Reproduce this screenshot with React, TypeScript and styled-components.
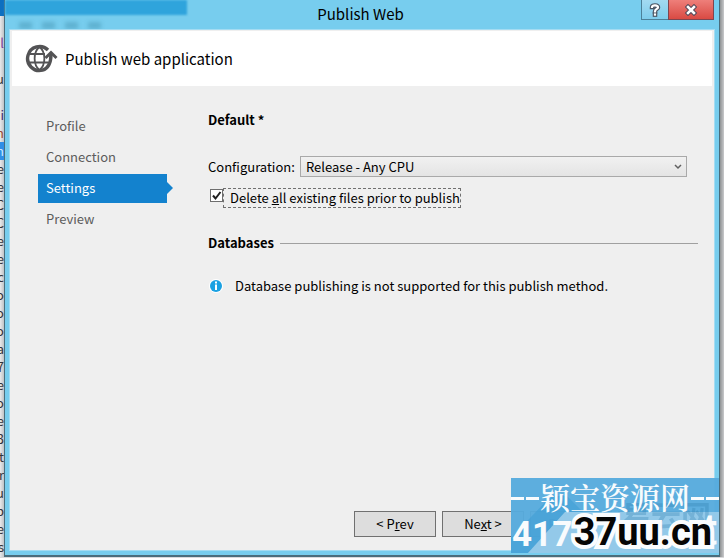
import React from 'react';
import styled, { createGlobalStyle, css } from 'styled-components';

const GlobalStyle = createGlobalStyle`
  *, *::before, *::after { box-sizing: border-box; }
  body {
    margin: 0;
    background: #d9d9db;
    color: #000;
    font: 13px/18px "Noto Sans CJK SC", "Noto Sans", sans-serif;
  }
  button, select, input { font: inherit; color: inherit; margin: 0; }
`;

const Desktop = styled.div`
  display: grid;
  grid-template-columns: 4px minmax(0, 1fr) 4px;
  min-height: 100vh;
  padding-bottom: 1px;
`;

const EditorEdge = styled.div`
  position: relative;
  overflow: hidden;
  background: linear-gradient(90deg, #e9e9eb, #bfc3c6);
`;

const EditorLines = styled.div`
  position: absolute;
  inset: 0;
`;

const EditorTop = styled.div`
  height: 16px;
  background: #0d6fc0;
`;

const EditorLine = styled.div<{ $selected?: boolean; $tone?: string }>`
  display: flex;
  justify-content: flex-end;
  height: 18px;
  color: ${(p) => p.$tone ?? '#33343a'};
  white-space: nowrap;
  ${(p) => p.$selected && css`background: #2f8ee6; color: #cfe6fb;`}
`;

const RightShadow = styled.div`
  background: linear-gradient(90deg, #8f9294, #c9cacc);
`;

const Window = styled.section`
  position: relative;
  display: flex;
  flex-direction: column;
  border: solid #4a6d7c;
  border-width: 0 1px 2px;
  background: #77cdee;
  padding: 0 5px 5px;
`;

const BehindGlass = styled.div`
  position: absolute;
  top: 0;
  left: 0;
  width: 182px;
  height: 15px;
  background: #2fa4dc;
  filter: blur(1px);
`;

const GlassMarks = styled.div`
  position: absolute;
  top: 22px;
  left: 14px;
  display: flex;
  gap: 10px;
  filter: blur(2px);
  i { width: 13px; height: 7px; background: #4f9fbd; opacity: 0.6; }
`;

const TitleBar = styled.header`
  position: relative;
  display: grid;
  grid-template-columns: 1fr auto;
  height: 30px;
`;

const WindowTitle = styled.h1`
  margin: 0;
  padding-left: 70px;
  font-size: 15px;
  font-weight: 400;
  line-height: 28px;
  text-align: center;
`;

const CaptionButtons = styled.div`
  display: flex;
  height: 20px;
`;

const CaptionButton = styled.button<{ $close?: boolean }>`
  display: grid;
  place-items: center;
  width: ${(p) => (p.$close ? 46 : 28)}px;
  padding: 0;
  border: 1px solid ${(p) => (p.$close ? '#7d4650' : '#4c8199')};
  border-top: 0;
  margin-left: ${(p) => (p.$close ? -1 : 0)}px;
  background: ${(p) =>
    p.$close
      ? 'linear-gradient(#ee7f7a, #d94a43)'
      : 'linear-gradient(#a3daf1, #7fcdec)'};
`;

const Client = styled.main`
  position: relative;
  flex: 1;
  display: flex;
  flex-direction: column;
  border: solid #efefef;
  border-width: 1px 2px 2px;
  outline: 1px solid #a5dcf2;
  background: #efefef;
`;

const Banner = styled.div`
  display: flex;
  align-items: center;
  gap: 6px;
  height: 55px;
  padding-left: 13px;
  background: #fff;
`;

const BannerTitle = styled.h2`
  margin: 0;
  font-size: 15px;
  font-weight: 400;
  line-height: 24px;
`;

const Body = styled.div`
  flex: 1;
  display: grid;
  grid-template-columns: 129px minmax(0, 1fr);
  gap: 41px;
  padding: 25px 14px 0 26px;
`;

const Steps = styled.nav`
  display: flex;
  flex-direction: column;
  gap: 2px;
  padding-top: 1px;
`;

const Step = styled.a<{ $active?: boolean }>`
  position: relative;
  height: 29px;
  padding-left: 8px;
  line-height: 28px;
  color: ${(p) => (p.$active ? '#fff' : '#5c5c5c')};
  text-decoration: none;
  ${(p) =>
    p.$active &&
    css`
      background: #1382ce;
      &::after {
        content: '';
        position: absolute;
        left: 100%;
        top: 8px;
        border: solid transparent;
        border-width: 6px 0 6px 6px;
        border-left-color: #1382ce;
      }
    `}
`;

const Settings = styled.form`
  display: flex;
  flex-direction: column;
`;

const SectionTitle = styled.h3`
  margin: 0;
  font-size: 13px;
  font-weight: 700;
  line-height: 18px;
`;

const Field = styled.div`
  display: grid;
  grid-template-columns: 92px minmax(0, 1fr);
  align-items: center;
  margin-top: 27px;
  padding-right: 11px;
`;

const SelectBox = styled.div`
  display: grid;
  align-items: center;
  > * { grid-area: 1 / 1; }
  svg { justify-self: end; margin-right: 5px; pointer-events: none; }
`;

const Select = styled.select`
  appearance: none;
  width: 100%;
  height: 21px;
  padding: 0 20px 0 5px;
  border: 1px solid #a9a9a9;
  border-radius: 0;
  background: linear-gradient(#f1f1f1, #e4e4e4);
`;

const CheckRow = styled.div`
  display: flex;
  margin: 11px 0 0 2px;
`;

const CheckBox = styled.span`
  display: grid;
  width: 13px;
  height: 13px;
  margin-top: 1px;
  > * { grid-area: 1 / 1; }
  svg { pointer-events: none; }
`;

const CheckInput = styled.input`
  appearance: none;
  width: 13px;
  height: 13px;
  border: 1px solid #6e6e6e;
  background: #fff;
  & + svg { visibility: hidden; }
  &:checked + svg { visibility: visible; }
`;

const CheckLabel = styled.label`
  border: 1px dashed #707070;
  padding-left: 6px;
  white-space: nowrap;
`;

const Databases = styled.div`
  display: flex;
  align-items: center;
  gap: 6px;
  margin-top: 26px;
  &::after { content: ''; flex: 1; height: 1px; background: #a0a0a0; }
`;

const Notice = styled.p`
  display: flex;
  align-items: center;
  gap: 12px;
  margin: 25px 0 0 1px;
`;

const Footer = styled.footer`
  display: flex;
  justify-content: flex-end;
  gap: 6px;
  padding: 0 12px 11px;
`;

const WizardButton = styled.button`
  width: 82px;
  height: 26px;
  padding: 0;
  border: 1px solid #707070;
  background: #dddddd;
`;

const Watermark = styled.aside`
  position: absolute;
  right: 0;
  bottom: 2px;
  width: 208px;
  height: 75px;
  overflow: hidden;
  color: #f8fbfd;
  pointer-events: none;
  > svg { position: absolute; inset: 0; }
`;

const MarkTop = styled.div`
  position: relative;
  display: flex;
  align-items: center;
  justify-content: center;
  gap: 1px;
  height: 36px;
  font: 600 30px/36px "Noto Serif CJK SC", "Noto Sans CJK SC", serif;
  white-space: nowrap;
`;

const Dashes = styled.span`
  display: flex;
  gap: 2px;
  padding-top: 4px;
  i { width: 13px; height: 3px; background: #f8fbfd; }
`;

const MarkGhost = styled.div`
  position: absolute;
  right: 8px;
  top: 20px;
  color: #2f7fae;
  opacity: 0.3;
  font: 700 30px/32px "Noto Sans CJK SC", sans-serif;
`;

const MarkNumber = styled.div`
  position: absolute;
  left: 1px;
  bottom: 0;
  font: 700 35px/36px Roboto, sans-serif;
`;

const MarkTail = styled.div`
  position: absolute;
  right: 2px;
  bottom: 0;
  font: 700 44px/46px "Liberation Sans", sans-serif;
`;

const MarkSite = styled.div`
  position: absolute;
  right: 7px;
  bottom: 0;
  color: #050505;
  font: 700 38px/42px Roboto, sans-serif;
  -webkit-text-stroke: 8px #fafcfe;
  paint-order: stroke fill;
`;

const PublishGlobe = () => (
  <svg width="34" height="30" viewBox="0 0 34 30" fill="none" stroke="#535355" aria-hidden="true">
    <path d="M23 6A12 12 0 1 0 17.5 26.2C23 24.5 26 19.5 26 10" strokeWidth="3.4" />
    <path d="M20.5 14 26 8.500 31.500 14" strokeWidth="3" />
    <path d="M14.500 3C8 8 8 21 14.500 26M14.500 3C21 8 21 21 14.500 26M4 10H20M3 18.500H23" strokeWidth="1.800" />
  </svg>
);

const glyph = { fill: 'none', strokeLinecap: 'square' as const };

const HelpGlyph = () => (
  <svg width="12" height="14" viewBox="0 0 12 14" {...glyph} aria-hidden="true">
    <g stroke="#4b5563" strokeWidth="4.500"><path d="M3 4C3 1.800 9 1.800 9 4.500C9 6 6 6 6 8.500" /><path d="M6 11.500V11.600" /></g>
    <g stroke="#fff" strokeWidth="2.200"><path d="M3 4C3 1.800 9 1.800 9 4.500C9 6 6 6 6 8.500" /><path d="M6 11.500V11.600" /></g>
  </svg>
);

const CloseGlyph = () => (
  <svg width="12" height="12" viewBox="0 0 12 12" {...glyph} aria-hidden="true">
    <path d="M3 3 9 9M9 3 3 9" stroke="#574a5a" strokeWidth="4.600" />
    <path d="M3 3 9 9M9 3 3 9" stroke="#fff" strokeWidth="2.500" />
  </svg>
);

type Line = { text: string; selected?: boolean; tone?: string };

const editorLines: Line[] = [
  { text: '' },
  { text: 'l', tone: '#7b3fa0' },
  { text: '' },
  { text: 'u' },
  { text: '' },
  { text: 'i', tone: '#3a2f78' },
  { text: 'n', tone: '#9b4a35' },
  { text: 'n', selected: true },
  ...['e', 'e', 'C', 'C', 'e', 'e', 'c', 'o', 'o', 'o', 'a', '7', 'e', 'o', 'e', '3', 't', 'r', 'u', 'p', 'e', 's'].map(
    (text) => ({ text }),
  ),
];

const steps = ['Profile', 'Connection', 'Settings', 'Preview'];

export default function App() {
  return (
    <>
      <GlobalStyle />
      <Desktop>
        <EditorEdge aria-hidden="true">
          <EditorLines>
            <EditorTop />
            {editorLines.map((line, i) => (
              <EditorLine key={i} $selected={line.selected} $tone={line.tone}>
                {line.text}
              </EditorLine>
            ))}
          </EditorLines>
        </EditorEdge>

        <Window>
          <BehindGlass />
          <GlassMarks><i /><i /><i /><i /></GlassMarks>
          <TitleBar>
            <WindowTitle>Publish Web</WindowTitle>
            <CaptionButtons>
              <CaptionButton type="button" aria-label="Help"><HelpGlyph /></CaptionButton>
              <CaptionButton type="button" aria-label="Close" $close><CloseGlyph /></CaptionButton>
            </CaptionButtons>
          </TitleBar>

          <Client>
            <Banner>
              <PublishGlobe />
              <BannerTitle>Publish web application</BannerTitle>
            </Banner>

            <Body>
              <Steps>
                {steps.map((name) => (
                  <Step key={name} href={`#${name.toLowerCase()}`} $active={name === 'Settings'}>
                    {name}
                  </Step>
                ))}
              </Steps>

              <Settings>
                <SectionTitle>Default *</SectionTitle>
                <Field>
                  <label htmlFor="configuration">Configuration:</label>
                  <SelectBox>
                    <Select id="configuration" defaultValue="release">
                      <option value="release">Release - Any CPU</option>
                      <option value="debug">Debug - Any CPU</option>
                    </Select>
                    <svg width="8" height="6" viewBox="0 0 8 6" fill="none" stroke="#606060" strokeWidth="1.500" aria-hidden="true">
                      <path d="M1 1 4 4 7 1" />
                    </svg>
                  </SelectBox>
                </Field>
                <CheckRow>
                  <CheckBox>
                    <CheckInput id="delete-files" type="checkbox" defaultChecked />
                    <svg width="13" height="13" viewBox="0 0 13 13" fill="none" stroke="#1f1f1f" strokeWidth="2" aria-hidden="true">
                      <path d="M3 6.500 5.500 9.500 10.500 3" />
                    </svg>
                  </CheckBox>
                  <CheckLabel htmlFor="delete-files">
                    Delete <u>a</u>ll existing files prior to publish
                  </CheckLabel>
                </CheckRow>
                <Databases>
                  <SectionTitle>Databases</SectionTitle>
                </Databases>
                <Notice>
                  <svg width="14" height="14" viewBox="0 0 14 14" aria-hidden="true">
                    <circle cx="7" cy="7" r="7" fill="#fff" />
                    <circle cx="7" cy="7" r="6" fill="#1ba1e2" />
                    <path d="M6 2.500H8V4.500H6ZM6 5.500H8V11H6Z" fill="#fff" />
                  </svg>
                  Database publishing is not supported for this publish method.
                </Notice>
              </Settings>
            </Body>

            <Footer>
              <WizardButton type="button">&lt; P<u>r</u>ev</WizardButton>
              <WizardButton type="button">Ne<u>x</u>t &gt;</WizardButton>
              <WizardButton type="button">Publish</WizardButton>
              <WizardButton type="button">Close</WizardButton>
            </Footer>
          </Client>

          <Watermark>
            <svg width="208" height="75" viewBox="0 0 208 75" aria-hidden="true">
              <rect width="208" height="75" fill="#56abdd" fillOpacity="0.960" />
              <path d="M40 18H56L72 34H54L17 75H0V60Z" fill="#409fd6" fillOpacity="0.600" />
              <path d="M54 34H208V75H17Z" fill="#93c9e9" />
            </svg>
            <MarkGhost>易云网</MarkGhost>
            <MarkTop>
              <Dashes><i /><i /></Dashes>
              颖宝资源网
              <Dashes><i /><i /></Dashes>
            </MarkTop>
            <MarkNumber>4173</MarkNumber>
            <MarkTail>t</MarkTail>
            <MarkSite>37uu.cn</MarkSite>
          </Watermark>
        </Window>
        <RightShadow />
      </Desktop>
    </>
  );
}
